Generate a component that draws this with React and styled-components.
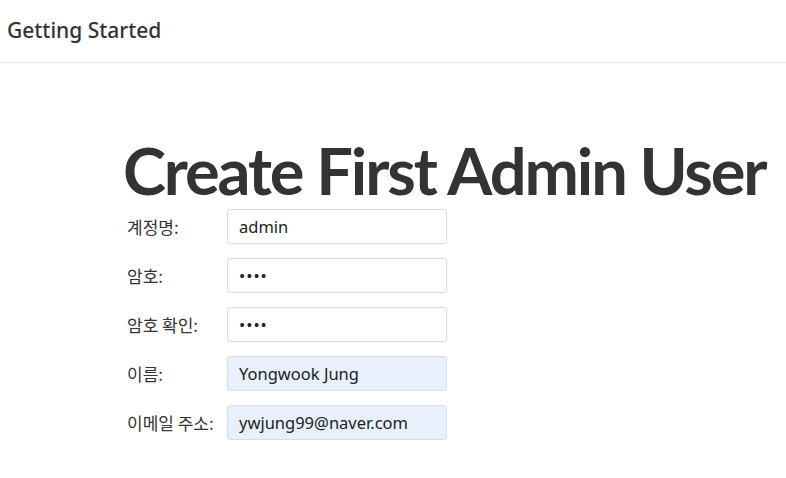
import React from "react";
import styled, { createGlobalStyle } from "styled-components";

const Global = createGlobalStyle`
  html, body { margin: 0; padding: 0; background: #fff; }
  body { font-family: "Noto Sans", "Noto Sans CJK KR", sans-serif; color: #333; }
`;

const Header = styled.header`
  height: 63px;
  border-bottom: 1px solid #e5e5e5;
  display: flex;
  align-items: center;
  padding: 0 7px;
  box-sizing: border-box;
`;

const HeaderTitle = styled.h4`
  margin: 0 0 2px;
  font-size: 21px;
  font-weight: 500;
  color: #333;
`;

const Main = styled.main`
  padding: 70px 0 0 123px;
`;

const Title = styled.h1`
  margin: 0 0 2px;
  font-family: "Lato", "Noto Sans", sans-serif;
  font-size: 65px;
  font-weight: 700;
  line-height: 74px;
  letter-spacing: -2.1px;
  color: #333;
  white-space: nowrap;
`;

const Form = styled.div`
  display: grid;
  grid-template-columns: 104px 220px;
  row-gap: 14px;
`;

const Label = styled.label`
  font-size: 17px;
  color: #333;
  padding: 5px 0 0 4px;
  white-space: nowrap;
  font-family: "Noto Sans CJK KR", "Noto Sans", sans-serif;
`;

const Input = styled.input`
  box-sizing: border-box;
  width: 220px;
  height: 35px;
  border: 1px solid #dcdcdc;
  border-radius: 3px;
  padding: 0 11px;
  font-family: "Noto Sans", sans-serif;
  font-size: 16.5px;
  color: #222;
  background: ${(p) => (p.$filled ? "#e8f0fe" : "#fff")};
  outline: none;
  letter-spacing: ${(p) => (p.type === "password" ? "1px" : "0")};
`;

const fields = [
  { label: "계정명:", value: "admin", type: "text" },
  { label: "암호:", value: "abcd", type: "password" },
  { label: "암호 확인:", value: "abcd", type: "password" },
  { label: "이름:", value: "Yongwook Jung", type: "text", filled: true },
  { label: "이메일 주소:", value: "ywjung99@naver.com", type: "text", filled: true },
];

export default function App() {
  return (
    <>
      <Global />
      <Header>
        <HeaderTitle>Getting Started</HeaderTitle>
      </Header>
      <Main>
        <Title>Create First Admin User</Title>
        <Form>
          {fields.map((f) => (
            <React.Fragment key={f.label}>
              <Label>{f.label}</Label>
              <Input type={f.type} defaultValue={f.value} $filled={f.filled} readOnly />
            </React.Fragment>
          ))}
        </Form>
      </Main>
    </>
  );
}
